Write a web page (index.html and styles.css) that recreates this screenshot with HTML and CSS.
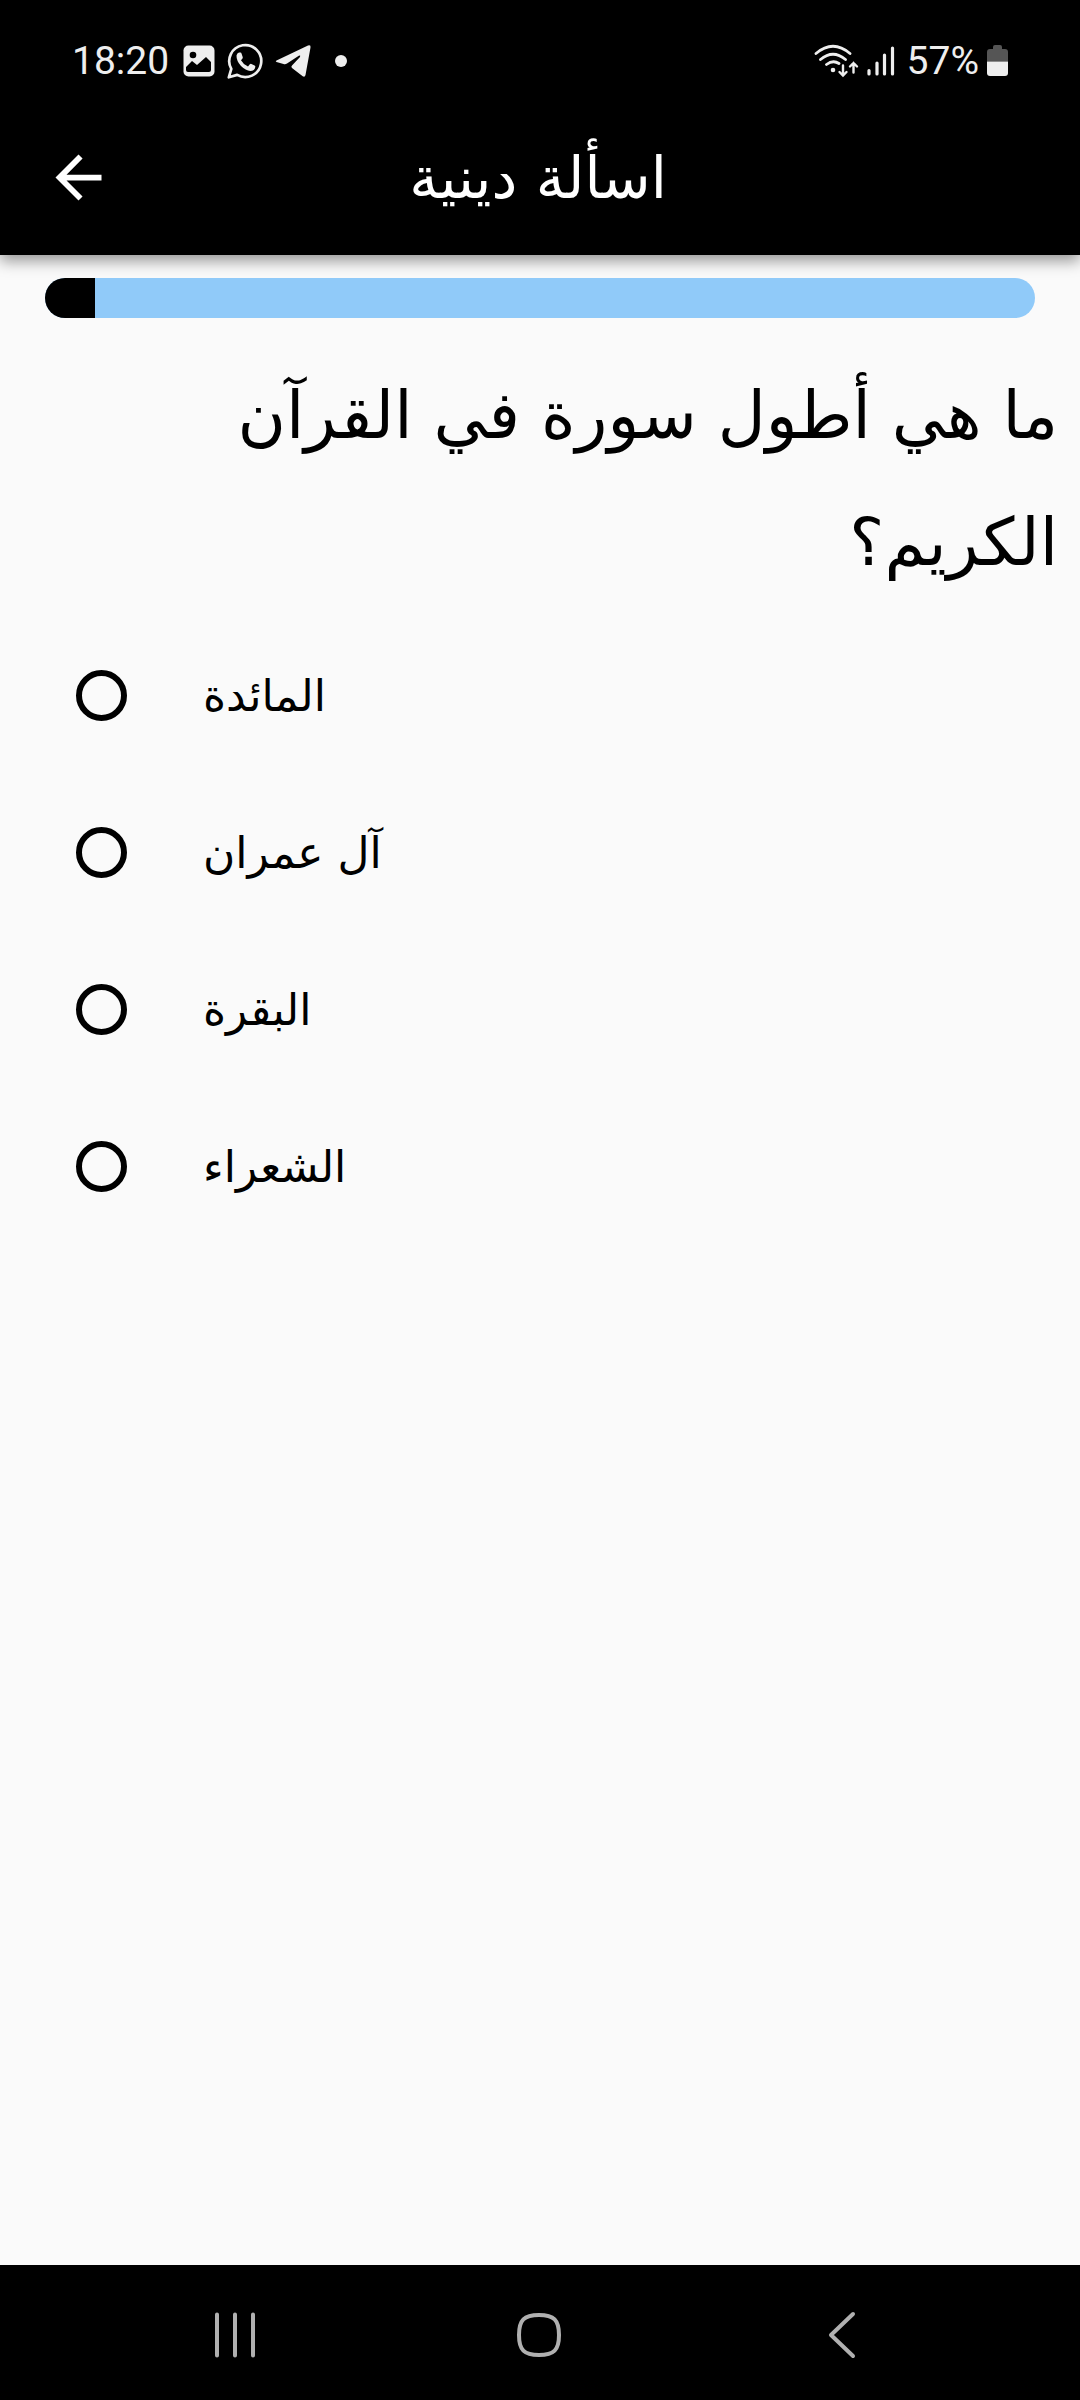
FILE: index.html
```
<!DOCTYPE html>
<html lang="ar">
<head>
	<meta charset="UTF-8">
	<meta name="viewport" content="width=device-width, initial-scale=1">
	<title>اسألة دينية</title>
	<link rel="stylesheet" href="styles.css">
</head>
<body>
	<div class="status-bar">
		<span class="status-text">18:20</span>
		<div class="notifications">
			<!-- gallery -->
			<svg width="32" height="32" viewBox="0 0 32 32">
				<rect width="31" height="31" x="0.5" y="0.5" rx="5" fill="#eee"/>
				<circle cx="10" cy="10" r="3.3" fill="#000"/>
				<path d="M3 22l6-6 5 4 9-8 5 5v8q0 2-2 2H5q-2 0-2-2z" fill="#000"/>
			</svg>
			<!-- whatsapp -->
			<svg width="36" height="36" viewBox="0 0 36 36">
				<path d="M1.800 34.300l2.500-8.400A16 16 0 1 1 10.200 31.900z" fill="none" stroke="#eee" stroke-width="2.700" stroke-linejoin="round"/>
				<path d="M9.500 12.500q.5-2.500 2.500-3h1.500q.8.2 1 1l1.200 3.500q.3 1-.4 1.700l-1.300 1.500q2.500 4.500 7 6.300l1.800-2.200q.7-.8 1.600-.4l3.200 1.700q.9.500.7 1.500-.6 3.800-5 4-4.500-.3-9.300-5-4.700-5.300-4.500-10.600z" fill="#eee"/>
			</svg>
			<!-- telegram -->
			<svg width="36" height="34" viewBox="0 0 36 34">
				<path d="M1.500 16.500L33 1.600q3-1 2.500 2L30.500 31q-.6 2.600-2.800 1.300L17 24q-1.300-1.300 0-2.600l8-8.500q.8-2-1.200-1.200L12 19.500q-1.700 1-3.500.4l-7-2q-1.500-.7 0-1.400z" fill="#eee"/>
			</svg>
			<span class="dot"></span>
		</div>
		<div class="system-icons">
			<!-- wifi -->
			<svg width="45" height="34" viewBox="0 0 45 34">
				<g fill="none" stroke="#eee" stroke-width="2.800" stroke-linecap="round">
					<path d="M2 9.500Q19-5 36 9.500M6.500 15.500q12.500-10.500 25 0M12.500 20.500q6.500-5 12.500-1"/>
					<path d="M29 21.500v9.500M25.500 28l3.500 3.500 3.500-3.500M39.500 28.500V19M36 22.500l3.500-3.500 3.500 3.500" stroke-width="2.400"/>
				</g>
				<circle cx="19" cy="26" r="2.300" fill="#eee"/>
			</svg>
			<!-- signal -->
			<svg width="28" height="30" viewBox="0 0 28 30">
				<path d="M2 24.500v3.500M10 17v11M17.500 9v19M25.500 2v26" fill="none" stroke="#eee" stroke-width="3.200" stroke-linecap="round"/>
			</svg>
			<span class="status-text percent">57%</span>
			<!-- battery -->
			<svg width="21" height="32" viewBox="0 0 21 32">
				<path d="M6 4V2q0-2 2-2h5q2 0 2 2v2h3q3 0 3 3v9.500H0V7q0-3 3-3z" fill="#555"/>
				<path d="M0 16.500h21V28q0 3-3 3H3q-3 0-3-3z" fill="#eee"/>
			</svg>
		</div>
	</div>

	<header class="app-bar">
		<button class="back" aria-label="رجوع">
			<svg width="69" height="69" viewBox="0 0 24 24">
				<path d="M20 11H7.830l5.590-5.590L12 4l-8 8 8 8 1.410-1.410L7.830 13H20v-2z" fill="#fff"/>
			</svg>
		</button>
		<h1 class="title" dir="rtl">اسألة دينية</h1>
	</header>

	<main class="quiz">
		<progress class="progress" value="5" max="100" aria-label="التقدم"></progress>
		<h2 class="question" id="question" dir="rtl">ما هي أطول سورة في القرآن<br>الكريم؟</h2>
		<div class="answers" role="radiogroup" aria-labelledby="question">
			<label class="answer"><input type="radio" name="answer"><span dir="rtl">المائدة</span></label>
			<label class="answer"><input type="radio" name="answer"><span dir="rtl">آل عمران</span></label>
			<label class="answer"><input type="radio" name="answer"><span dir="rtl">البقرة</span></label>
			<label class="answer"><input type="radio" name="answer"><span dir="rtl">الشعراء</span></label>
		</div>
	</main>

	<nav class="nav-bar">
		<button aria-label="التطبيقات الأخيرة">
			<svg width="48" height="48" viewBox="0 0 48 48">
				<path d="M6 3.500v41M24 3.500v41M42 3.500v41"/>
			</svg>
		</button>
		<button aria-label="الشاشة الرئيسية">
			<svg width="48" height="48" viewBox="0 0 48 48">
				<path d="M24 4C39 4 44 9 44 24S39 44 24 44 4 39 4 24 9 4 24 4z"/>
			</svg>
		</button>
		<button aria-label="رجوع">
			<svg width="48" height="48" viewBox="0 0 48 48">
				<path d="M35 3L13 24l22 21"/>
			</svg>
		</button>
	</nav>
</body>
</html>
```

FILE: styles.css
```
* {
	box-sizing: border-box;
}

body {
	margin: 0;
	min-height: 100vh;
	display: flex;
	flex-direction: column;
	background: #fafafa;
	color: #000;
	font-family: "DejaVu Sans", sans-serif;
}

button {
	display: flex;
	align-items: center;
	justify-content: center;
	padding: 0;
	border: 0;
	background: none;
	cursor: pointer;
}

svg {
	display: block;
	flex: none;
}

/* status bar */
.status-bar {
	display: flex;
	align-items: center;
	height: 100px;
	padding: 22px 72px 0;
	background: #000;
}

.status-text {
	color: #eee;
	font: 39px/40px Roboto, sans-serif;
}

.notifications {
	display: flex;
	align-items: center;
	gap: 12px;
	margin-left: 14px;
}

.dot {
	width: 12px;
	height: 12px;
	margin-left: 12px;
	border-radius: 50%;
	background: #eee;
}

.system-icons {
	display: flex;
	align-items: center;
	gap: 8px;
	margin-left: auto;
}

.percent {
	margin-left: 4px;
}

/* app bar */
.app-bar {
	display: grid;
	grid-template-columns: 156px 1fr 160px;
	align-items: center;
	height: 155px;
	background: #000;
	box-shadow: 0 6px 14px rgba(0, 0, 0, 0.4);
}

.back {
	height: 155px;
}

.title {
	margin: 0;
	color: #fff;
	font-size: 58px;
	line-height: 80px;
	font-weight: normal;
	text-align: center;
}

/* quiz */
.quiz {
	flex: 1;
	padding-top: 23px;
}

.progress {
	display: block;
	width: calc(100% - 90px);
	height: 40px;
	margin: 0 45px;
	border: 0;
	border-radius: 20px;
	overflow: hidden;
	appearance: none;
	background: #90caf9;
}

.progress::-webkit-progress-bar {
	background: #90caf9;
}

.progress::-webkit-progress-value {
	background: #000;
}

.question {
	margin: 34px 22px 0;
	font-size: 66px;
	line-height: 127px;
	font-weight: normal;
}

.answers {
	margin-top: 11px;
}

.answer {
	display: flex;
	align-items: center;
	gap: 76px;
	height: 157px;
	padding: 0 76px;
	font-size: 44px;
	line-height: 60px;
	cursor: pointer;
}

.answer input {
	appearance: none;
	width: 51px;
	height: 51px;
	margin: 0;
	border: 6px solid #000;
	border-radius: 50%;
}

.answer input:checked {
	background: radial-gradient(#000 45%, transparent 50%);
}

/* system navigation */
.nav-bar {
	display: flex;
	justify-content: space-around;
	align-items: center;
	height: 135px;
	padding: 5px 86px 0 83px;
	background: #000;
}

.nav-bar button {
	flex: 1;
	height: 130px;
}

.nav-bar path {
	fill: none;
	stroke: #b0b0b0;
	stroke-width: 4;
	stroke-linecap: round;
	stroke-linejoin: round;
}
```
